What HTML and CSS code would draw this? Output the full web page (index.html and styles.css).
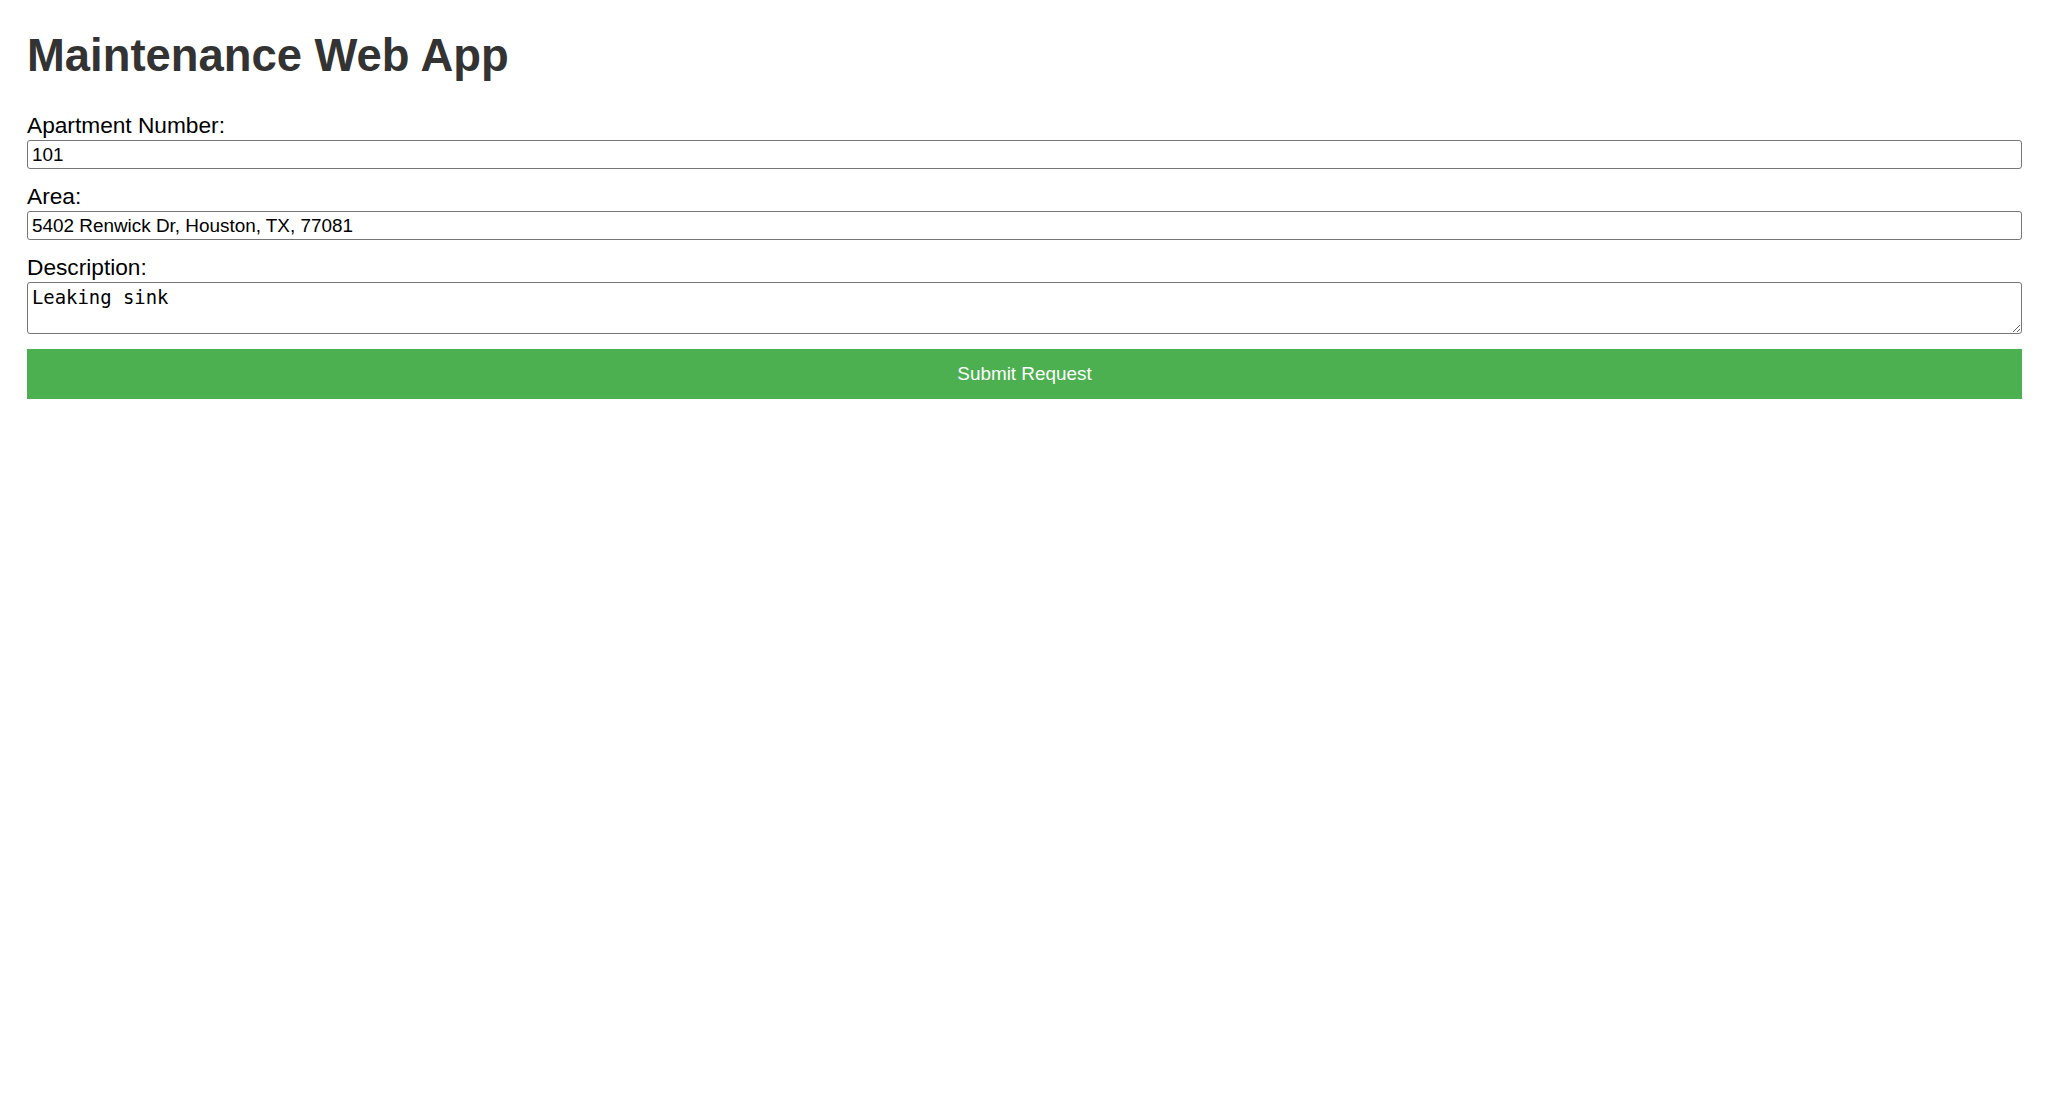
FILE: index.html
```html
<!DOCTYPE html>
<html lang="en">
<head>
<meta charset="UTF-8">
<meta name="viewport" content="width=device-width, initial-scale=1.0">
<title>Maintenance Web App</title>
<link rel="stylesheet" href="styles.css">
</head>
<body>

<div class="container">
    <h1>Maintenance Web App</h1>
    <form id="requestForm" class="request-form">
        <div class="field">
            <label for="apartment">Apartment Number:</label>
            <input type="text" id="apartment" name="apartment" value="101">
        </div>

        <div class="field">
            <label for="area">Area:</label>
            <input type="text" id="area" name="area" value="5402 Renwick Dr, Houston, TX, 77081">
        </div>

        <div class="field">
            <label for="description">Description:</label>
            <textarea id="description" name="description">Leaking sink</textarea>
        </div>

        <button type="button" class="submit-btn">Submit Request</button>
    </form>
</div>

</body>
</html>
```

FILE: styles.css
```css
body {
    margin: 0;
    padding: 0;
    background-color: #fff;
    font-family: "Liberation Sans", Arial, sans-serif;
}

.container {
    padding: 0 26px 0 27px;
}

h1 {
    margin: 30px 0 31px;
    font-size: 45.4px;
    font-weight: bold;
    color: #333;
}

.request-form {
    display: flex;
    flex-direction: column;
}

.field {
    display: flex;
    flex-direction: column;
    margin-bottom: 15px;
}

.field label {
    font-size: 22.7px;
    line-height: 25px;
    margin-bottom: 2px;
    color: #000;
}

.field input,
.field textarea {
    width: 100%;
    box-sizing: border-box;
    margin: 0;
    border: 1px solid #767676;
    border-radius: 3px;
    color: #000;
    background-color: #fff;
}

.field input {
    height: 29px;
    padding: 0 4px;
    font-family: "Liberation Sans", Arial, sans-serif;
    font-size: 18.9px;
}

.field textarea {
    height: 52px;
    padding: 3px 4px;
    font-family: "DejaVu Sans Mono", monospace;
    font-size: 18.9px;
}

.submit-btn {
    width: 100%;
    height: 50px;
    margin: 0;
    border: none;
    border-radius: 0;
    background-color: #4caf50;
    color: #fff;
    font-family: "Liberation Sans", Arial, sans-serif;
    font-size: 18.9px;
    cursor: pointer;
}
```
